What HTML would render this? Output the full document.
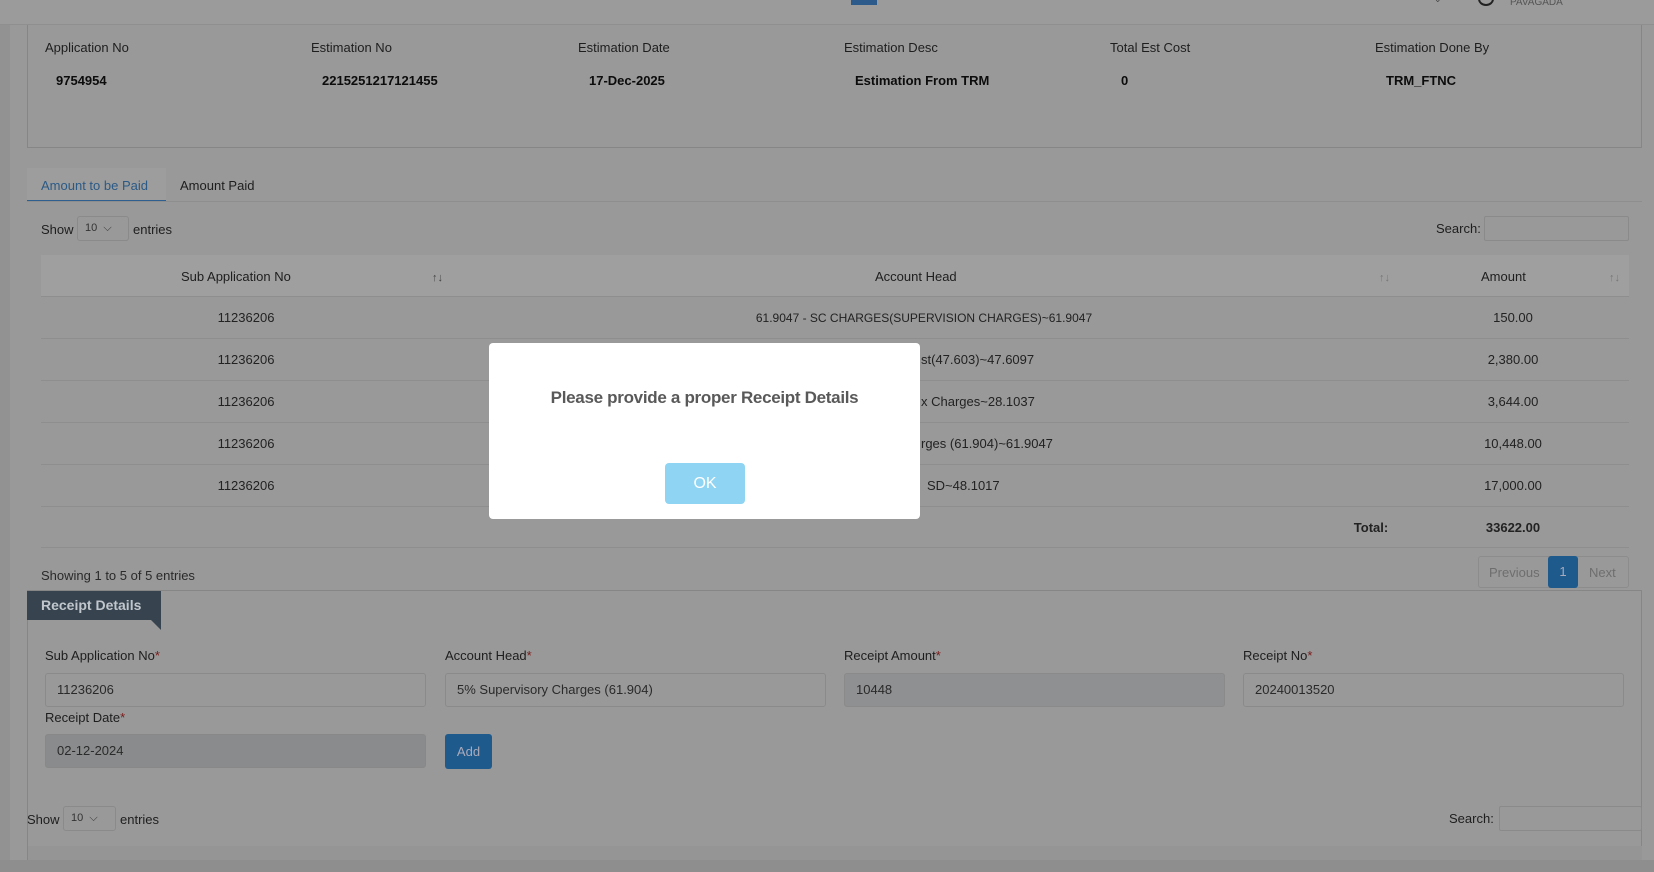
<!DOCTYPE html>
<html><head><meta charset="utf-8"><style>
*{box-sizing:border-box;margin:0;padding:0}
body{width:1654px;height:872px;background:#999;font-family:"Liberation Sans",sans-serif;font-size:13px;color:#1e1e1e;position:relative;overflow:hidden}
.a{position:absolute;white-space:nowrap}
.b{font-weight:bold;color:#0c0c0c}
.inp{position:absolute;border:1px solid #8a8a8a;border-radius:3px;background:#999;padding-left:11px;line-height:32px;color:#2a2a2a}
.r{position:absolute;left:41px;width:1588px;height:42px;border-top:1px solid #8e8e8e}
.c{position:absolute;top:0;line-height:42px;transform:translateX(-50%);color:#222}
.d{position:absolute;top:0;line-height:42px;left:880px;color:#222}
.req{color:#7a1a1a}
</style></head><body>
<!-- header -->
<div class="a" style="left:0;top:0;width:1654px;height:25px;background:#9b9b9b;border-bottom:1px solid #8f8f8f"></div>
<div class="a" style="left:851px;top:0;width:26px;height:5px;background:#2c5a8a"></div>
<div class="a" style="left:1478px;top:-8px;width:16px;height:14px;border:2px solid #222;border-radius:50%"></div>
<div class="a" style="left:1510px;top:-3px;font-size:10px;color:#555">PAVAGADA</div>
<div class="a" style="left:1434px;top:-6px;font-size:9px;color:#444">⌄</div>
<div class="a" style="left:0;top:25px;width:10px;height:835px;background:#929292"></div>
<!-- info box -->
<div class="a" style="left:27px;top:25px;width:1615px;height:123px;border:1px solid #868686;border-top:none"></div>
<div class="a" style="left:45px;top:40px">Application No</div>
<div class="a" style="left:311px;top:40px">Estimation No</div>
<div class="a" style="left:578px;top:40px">Estimation Date</div>
<div class="a" style="left:844px;top:40px">Estimation Desc</div>
<div class="a" style="left:1110px;top:40px">Total Est Cost</div>
<div class="a" style="left:1375px;top:40px">Estimation Done By</div>
<div class="a b" style="left:56px;top:73px">9754954</div>
<div class="a b" style="left:322px;top:73px">2215251217121455</div>
<div class="a b" style="left:589px;top:73px">17-Dec-2025</div>
<div class="a b" style="left:855px;top:73px">Estimation From TRM</div>
<div class="a b" style="left:1121px;top:73px">0</div>
<div class="a b" style="left:1386px;top:73px">TRM_FTNC</div>
<!-- tabs -->
<div class="a" style="left:27px;top:168px;width:139px;height:34px;background:#9d9d9d;border-bottom:2px solid #2e5f8e"></div>
<div class="a" style="left:27px;top:201px;width:1615px;height:1px;background:#8e8e8e"></div>
<div class="a" style="left:41px;top:178px;color:#2b5a86">Amount to be Paid</div>
<div class="a" style="left:180px;top:178px">Amount Paid</div>
<!-- show entries -->
<div class="a" style="left:41px;top:222px">Show</div>
<div class="a" style="left:77px;top:216px;width:52px;height:25px;border:1px solid #8a8a8a;border-radius:3px;font-size:11px;line-height:23px;padding-left:7px;color:#333">10 &nbsp;⌵</div>
<div class="a" style="left:133px;top:222px">entries</div>
<div class="a" style="left:1436px;top:221px">Search:</div>
<div class="a" style="left:1484px;top:216px;width:145px;height:25px;border:1px solid #8a8a8a;border-radius:2px"></div>
<!-- table header -->
<div class="a" style="left:41px;top:255px;width:1588px;height:41px;background:#9f9f9f"></div>
<div class="a" style="left:181px;top:269px">Sub Application No</div>
<div class="a" style="left:432px;top:272px;font-size:11px;color:#444">↑↓</div>
<div class="a" style="left:875px;top:269px">Account Head</div>
<div class="a" style="left:1379px;top:272px;font-size:11px;color:#777">↑↓</div>
<div class="a" style="left:1481px;top:269px">Amount</div>
<div class="a" style="left:1609px;top:272px;font-size:11px;color:#777">↑↓</div>
<!-- rows -->
<div class="r" style="top:296px"><div class="c" style="left:205px">11236206</div><div class="c" style="left:883px;font-size:12px">61.9047 - SC CHARGES(SUPERVISION CHARGES)~61.9047</div><div class="c" style="left:1472px">150.00</div></div>
<div class="r" style="top:338px"><div class="c" style="left:205px">11236206</div><div class="d">st(47.603)~47.6097</div><div class="c" style="left:1472px">2,380.00</div></div>
<div class="r" style="top:380px"><div class="c" style="left:205px">11236206</div><div class="d">x Charges~28.1037</div><div class="c" style="left:1472px">3,644.00</div></div>
<div class="r" style="top:422px"><div class="c" style="left:205px">11236206</div><div class="d">rges (61.904)~61.9047</div><div class="c" style="left:1472px">10,448.00</div></div>
<div class="r" style="top:464px"><div class="c" style="left:205px">11236206</div><div class="d" style="left:886px">SD~48.1017</div><div class="c" style="left:1472px">17,000.00</div></div>
<div class="r" style="top:506px;border-bottom:1px solid #8e8e8e"><div class="c b" style="left:1330px">Total:</div><div class="c b" style="left:1472px">33622.00</div></div>
<div class="a" style="left:41px;top:568px;color:#2a2a2a">Showing 1 to 5 of 5 entries</div>
<div class="a" style="left:1478px;top:556px;width:151px;height:32px;border:1px solid #8c8c8c;border-radius:3px"></div>
<div class="a" style="left:1489px;top:565px;color:#6e6e6e">Previous</div>
<div class="a" style="left:1548px;top:556px;width:30px;height:32px;background:#1f5a8c;border-radius:3px;color:#aab;text-align:center;line-height:32px">1</div>
<div class="a" style="left:1589px;top:565px;color:#6e6e6e">Next</div>
<!-- receipt panel -->
<div class="a" style="left:27px;top:590px;width:1615px;height:280px;border:1px solid #868686;border-bottom:none"></div>
<div class="a" style="left:27px;top:591px;width:134px;height:29px;background:#37444f;color:#c0c6cc;font-weight:bold;font-size:14px;line-height:29px;padding-left:14px">Receipt Details</div>
<div class="a" style="left:150px;top:619px;width:0;height:0;border-left:11px solid transparent;border-top:11px solid #37444f"></div>
<div class="a" style="left:45px;top:648px">Sub Application No<span class="req">*</span></div>
<div class="a" style="left:445px;top:648px">Account Head<span class="req">*</span></div>
<div class="a" style="left:844px;top:648px">Receipt Amount<span class="req">*</span></div>
<div class="a" style="left:1243px;top:648px">Receipt No<span class="req">*</span></div>
<div class="inp" style="left:45px;top:673px;width:381px;height:34px">11236206</div>
<div class="inp" style="left:445px;top:673px;width:381px;height:34px">5% Supervisory Charges (61.904)</div>
<div class="inp" style="left:844px;top:673px;width:381px;height:34px;background:#8f9092">10448</div>
<div class="inp" style="left:1243px;top:673px;width:381px;height:34px">20240013520</div>
<div class="a" style="left:45px;top:710px">Receipt Date<span class="req">*</span></div>
<div class="inp" style="left:45px;top:734px;width:381px;height:34px;background:#8a8b8c;border-color:#888">02-12-2024</div>
<div class="a" style="left:445px;top:734px;width:47px;height:35px;background:#1f5a8c;border-radius:3px;color:#aab;text-align:center;line-height:35px">Add</div>
<div class="a" style="left:27px;top:812px">Show</div>
<div class="a" style="left:63px;top:806px;width:53px;height:25px;border:1px solid #8a8a8a;border-radius:3px;font-size:11px;line-height:23px;padding-left:7px;color:#333">10 &nbsp;⌵</div>
<div class="a" style="left:120px;top:812px">entries</div>
<div class="a" style="left:1449px;top:811px">Search:</div>
<div class="a" style="left:1499px;top:806px;width:143px;height:25px;border:1px solid #8a8a8a;border-radius:2px"></div>
<div class="a" style="left:28px;top:846px;width:1614px;height:14px;background:#959595"></div>
<div class="a" style="left:0;top:860px;width:1654px;height:12px;background:#8e8e8e"></div>
<!-- modal -->
<div class="a" style="left:489px;top:343px;width:431px;height:176px;background:#fff;border-radius:4px"></div>
<div class="a" style="left:489px;top:388px;width:431px;text-align:center;font-size:17px;font-weight:bold;color:#595959;letter-spacing:-0.3px">Please provide a proper Receipt Details</div>
<div class="a" style="left:665px;top:463px;width:80px;height:41px;background:#8fd4f2;border-radius:4px;color:#fff;font-size:16px;text-align:center;line-height:41px">OK</div>
</body></html>
